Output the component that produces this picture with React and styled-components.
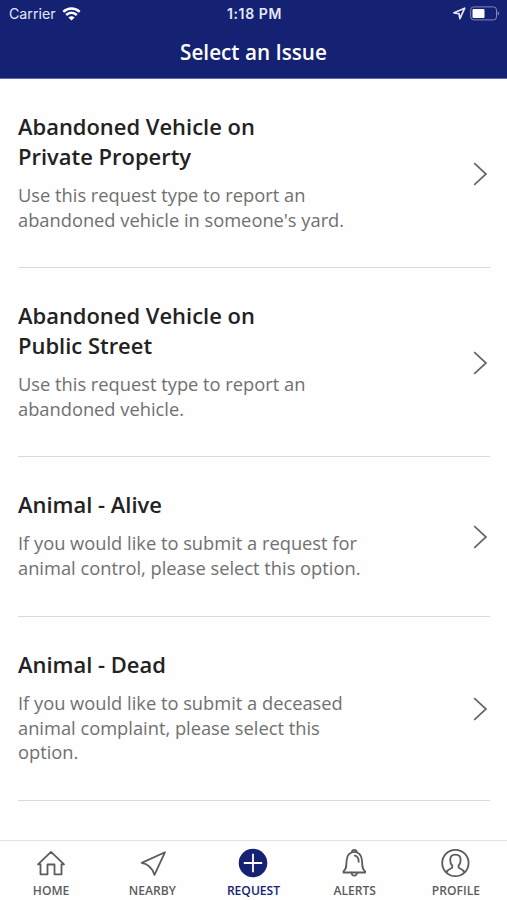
import React from "react";
import styled, { createGlobalStyle } from "styled-components";

const GlobalStyle = createGlobalStyle`
  * {
    box-sizing: border-box;
  }

  body {
    margin: 0;
    background: #fff;
    font-family: "Open Sans", "Noto Sans", sans-serif;
  }
`;

const Screen = styled.div`
  display: flex;
  flex-direction: column;
  width: 507px;
  height: 900px;
  overflow: hidden;
  background: #fefefe;
`;

const Header = styled.header`
  flex: none;
  height: 79px;
  background: #152173;
  border-bottom: 1px solid #5e6caa;
  color: #fff;
`;

const StatusBar = styled.div`
  display: grid;
  grid-template-columns: 1fr auto 1fr;
  align-items: center;
  height: 27px;
  padding: 0 7px 0 9px;
  font-family: Inter, sans-serif;
  font-size: 14.2px;
  color: #e4e8f8;
`;

const StatusGroup = styled.div`
  display: flex;
  align-items: center;
  justify-content: ${props => (props.$end ? "flex-end" : "flex-start")};
  gap: ${props => (props.$end ? "4px" : "6px")};
`;

const Clock = styled.span`
  font-weight: 600;
  font-size: 14px;
  letter-spacing: 0.6px;
`;

const Title = styled.h1`
  margin: 0;
  font-size: 20.7px;
  font-weight: 580;
  line-height: 50px;
  text-align: center;
`;

const List = styled.main`
  flex: 1;
  padding: 0 17px 0 18px;
`;

const Row = styled.section`
  display: flex;
  align-items: center;
  justify-content: space-between;
  padding: 33px 2px 34.6px 0;
  border-bottom: 1px solid #d9d9d9;
`;

const IssueName = styled.h2`
  margin: 0 0 11px;
  font-size: 21.95px;
  font-weight: 580;
  line-height: 29.9px;
  white-space: pre-line;
  color: #222;
`;

const Description = styled.p`
  margin: 0;
  font-size: 18.29px;
  line-height: 24.9px;
  white-space: pre-line;
  color: #707070;
`;

const TabBar = styled.nav`
  flex: none;
  display: flex;
  height: 60px;
  padding-right: 1px;
  border-top: 1px solid #e3e3e3;
  background: #fefefe;
`;

const Tab = styled.div`
  flex: 1;
  display: flex;
  flex-direction: column;
  align-items: center;
  padding-top: 6px;
  color: ${props => (props.$active ? "#152173" : "#5c5c5c")};
`;

const TabLabel = styled.span`
  margin-top: 3px;
  padding-left: 1px;
  font-size: 12.1px;
  font-weight: 600;
  line-height: 18px;
`;

const Icon = styled.svg`
  display: block;
  flex: none;
  fill: none;
  stroke: currentColor;
`;

const WifiIcon = () => (
  <Icon width="19" height="14" viewBox="0 0 19 14" color="#fff" strokeWidth="2.5">
    <path d="M1.3 4.900C6 .4 13 .4 17.700 4.900M4.200 8c3-2.900 7.600-2.900 10.600 0" />
    <path d="M6.400 10.500c1.800-1.700 4.400-1.700 6.200 0L9.500 13.600z" fill="currentColor" stroke="none" />
  </Icon>
);

const LocationIcon = () => (
  <Icon width="13" height="13" viewBox="0 0 13 13" strokeWidth="1.700" strokeLinejoin="round">
    <path d="M11.700 1.200 1 5.800l5 .9.900 4.900z" />
  </Icon>
);

const BatteryIcon = () => (
  <Icon width="30" height="15" viewBox="0 0 30 15">
    <rect x=".7" y=".9" width="25.800" height="13" rx="3" stroke="#7f89bd" />
    <rect x="2.500" y="2.900" width="12" height="9" rx="1" fill="#fff" stroke="none" />
    <path d="M27.700 5.200c2 .9 2 3.500 0 4.400z" fill="#7f89bd" stroke="none" />
  </Icon>
);

const ChevronIcon = styled(Icon)`
  margin-top: 3.4px;
`;

const Chevron = () => (
  <ChevronIcon width="15" height="24" viewBox="0 0 15 24" color="#666" strokeWidth="1.700">
    <path d="M1.200 1.200 13 12 1.200 22.800" />
  </ChevronIcon>
);

const TabIcon = ({ children }) => (
  <Icon width="32" height="32" viewBox="0 0 32 32" strokeWidth="1.800" strokeLinejoin="round" strokeLinecap="round">
    {children}
  </Icon>
);

const icons = {
  home: <path d="M3 17.300 16 4.900l13 12.400h-2.500v10h-7V17.500h-7v9.800h-7v-10z" />,
  nearby: <path d="M29 5.200 5.700 15.900c6.800 1.300 10.500 4.500 12.800 12z" />,
  request: (
    <>
      <circle cx="16" cy="16" r="14.300" fill="currentColor" stroke="none" />
      <path d="M6.800 16h18.400M16 6.800v18.400" stroke="#fff" strokeLinecap="butt" />
    </>
  ),
  alerts: (
    <>
      <path d="M5.500 25.500h21.600v-1.300c-3-1.700-2.800-5.500-3.100-10.900-.3-5-3.500-8.500-7.700-8.500s-7.400 3.500-7.700 8.500c-.3 5.400-.1 9.200-3.100 10.900z" />
      <path d="M14 4.800c.2-2.700 4.400-2.700 4.600 0M13.600 25.700c.3 4 5.100 4 5.400 0M16.800 8.600c2.700.5 3.900 2.500 3.900 6.200" />
    </>
  ),
  profile: (
    <>
      <circle cx="16.400" cy="16" r="13.200" />
      <path d="M7.500 25.200c1-2.600 3.100-3.200 5.700-4.400v-2.300c-1.400-1.300-2-3.200-2-5.500 0-3.400 2-5.300 5.200-5.300s5.200 1.900 5.200 5.300c0 2.300-.6 4.200-2 5.500v2.300c2.600 1.200 4.700 1.800 5.700 4.400" />
    </>
  )
};

const issues = [
  {
    name: "Abandoned Vehicle on\nPrivate Property",
    description: "Use this request type to report an\nabandoned vehicle in someone's yard."
  },
  {
    name: "Abandoned Vehicle on\nPublic Street",
    description: "Use this request type to report an\nabandoned vehicle."
  },
  {
    name: "Animal - Alive",
    description: "If you would like to submit a request for\nanimal control, please select this option."
  },
  {
    name: "Animal - Dead",
    description: "If you would like to submit a deceased\nanimal complaint, please select this\noption."
  }
];

const tabs = ["home", "nearby", "request", "alerts", "profile"];

const IssueRow = ({ name, description }) => (
  <Row>
    <div>
      <IssueName>{name}</IssueName>
      <Description>{description}</Description>
    </div>
    <Chevron />
  </Row>
);

const App = () => (
  <>
    <GlobalStyle />
    <Screen>
      <Header>
        <StatusBar>
          <StatusGroup>
            <span>Carrier</span>
            <WifiIcon />
          </StatusGroup>
          <Clock>1:18 PM</Clock>
          <StatusGroup $end>
            <LocationIcon />
            <BatteryIcon />
          </StatusGroup>
        </StatusBar>
        <Title>Select an Issue</Title>
      </Header>
      <List>
        {issues.map(issue => (
          <IssueRow key={issue.name} {...issue} />
        ))}
      </List>
      <TabBar>
        {tabs.map(tab => (
          <Tab key={tab} $active={tab === "request"}>
            <TabIcon>{icons[tab]}</TabIcon>
            <TabLabel>{tab.toUpperCase()}</TabLabel>
          </Tab>
        ))}
      </TabBar>
    </Screen>
  </>
);

export default App;
